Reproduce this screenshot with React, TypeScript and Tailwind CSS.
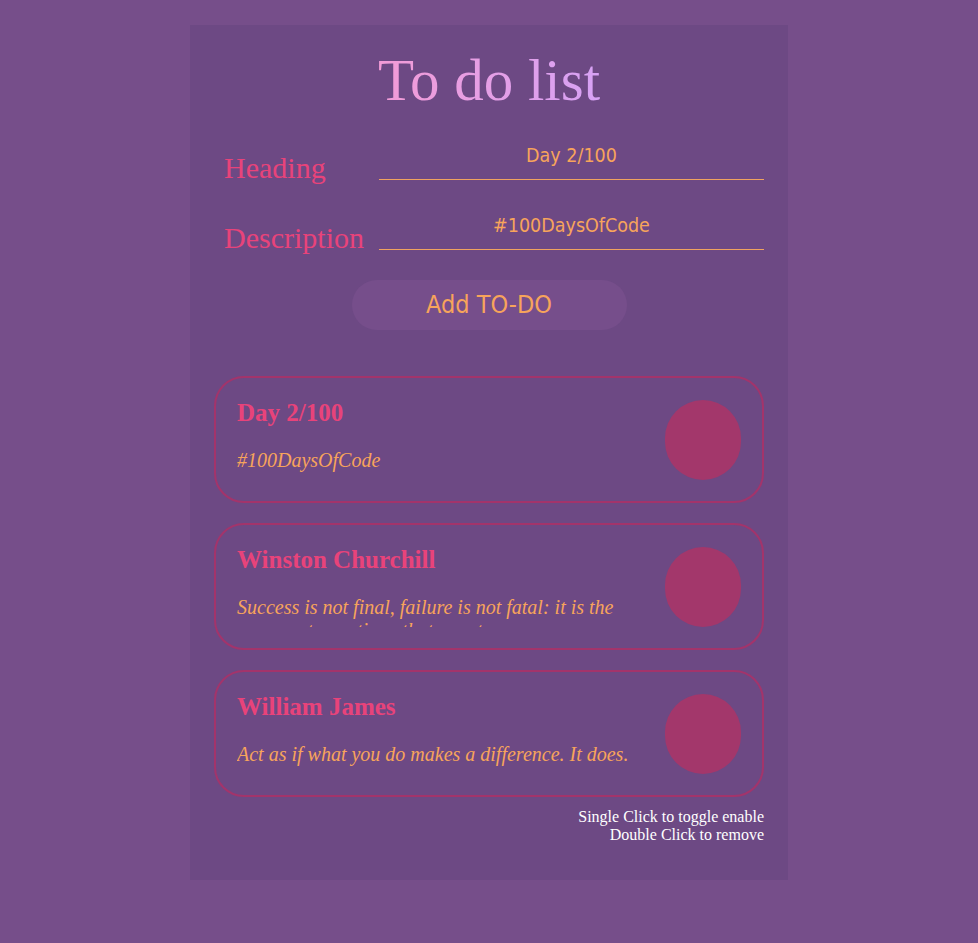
import { useState } from "react";

type Todo = {
  id: number;
  title: string;
  desc: string;
  enabled: boolean;
};

const serif = "font-['Liberation_Serif','Times_New_Roman',serif]";
const inputFont =
  "font-['DejaVu_Sans_Condensed','DejaVu_Sans','Liberation_Sans',sans-serif]";

const initialTodos: Todo[] = [
  { id: 1, title: "Day 2/100", desc: "#100DaysOfCode", enabled: true },
  {
    id: 2,
    title: "Winston Churchill",
    desc: "Success is not final, failure is not fatal: it is the courage to continue that counts.",
    enabled: true,
  },
  {
    id: 3,
    title: "William James",
    desc: "Act as if what you do makes a difference. It does.",
    enabled: true,
  },
];

const App = () => {
  const [heading, setHeading] = useState<string>("Day 2/100");
  const [description, setDescription] = useState<string>("#100DaysOfCode");
  const [todos, setTodos] = useState<Todo[]>(initialTodos);

  const handleAdd = () => {
    if (!heading.trim()) return;
    setTodos([
      { id: Date.now(), title: heading, desc: description, enabled: true },
      ...todos,
    ]);
  };

  const handleToggle = (id: number) => {
    setTodos(todos.map((t) => (t.id === id ? { ...t, enabled: !t.enabled } : t)));
  };

  const handleRemove = (id: number) => {
    setTodos(todos.filter((t) => t.id !== id));
  };

  return (
    <div className="min-h-screen bg-[#764e8a] pt-[25px] pb-[63px]">
      <div className="mx-auto w-[598px] bg-[#6d4984] pt-[22px] pb-[35px]">
        <h1
          className={`${serif} text-center text-[59px] leading-[67px] mb-[18px]`}
        >
          <span className="bg-gradient-to-r from-[#f29bd6] to-[#d7a2f5] bg-clip-text text-transparent">
            To do list
          </span>
        </h1>

        <div className="flex flex-col gap-[22px] pl-[34px] pr-[24px]">
          <div className="flex items-end">
            <label className={`${serif} w-[155px] text-[30px] leading-[24px] text-[#e8437a]`}>
              Heading
            </label>
            <input
              value={heading}
              onChange={(e) => setHeading(e.target.value)}
              className={`${inputFont} h-[48px] flex-1 border-b border-[#f0a35f] bg-transparent text-center text-[19.5px] text-[#f7a45b] outline-none`}
            />
          </div>
          <div className="flex items-end">
            <label className={`${serif} w-[155px] text-[30px] leading-[24px] text-[#e8437a]`}>
              Description
            </label>
            <input
              value={description}
              onChange={(e) => setDescription(e.target.value)}
              className={`${inputFont} h-[48px] flex-1 border-b border-[#f0a35f] bg-transparent text-center text-[19.5px] text-[#f7a45b] outline-none`}
            />
          </div>
        </div>

        <div className="mt-[30px] flex justify-center">
          <button
            onClick={handleAdd}
            className={`${inputFont} h-[50px] w-[275px] rounded-full bg-[#764e8b] text-[25px] text-[#f7a45b]`}
          >
            Add TO-DO
          </button>
        </div>

        <div className="mt-[46px] flex flex-col gap-[20px] px-[24px]">
          {todos.map((item) => (
            <div
              key={item.id}
              onClick={() => handleToggle(item.id)}
              onDoubleClick={() => handleRemove(item.id)}
              className={`flex cursor-pointer items-center gap-[20px] rounded-[30px] border-2 border-[#a3346b] px-[21px] py-[21px] ${
                item.enabled ? "" : "opacity-50"
              }`}
            >
              <div className={`${serif} flex-1`}>
                <h2 className="text-[25px] font-bold leading-[28px] text-[#e8437a]">
                  {item.title}
                </h2>
                <p className="mt-[22px] h-[31px] overflow-hidden text-[20px] italic leading-[23px] text-[#f7a45b]">
                  {item.desc}
                </p>
              </div>
              <div className="h-[80px] w-[76px] shrink-0 rounded-full bg-[#a3376b]" />
            </div>
          ))}
        </div>

        <div
          className={`${serif} mt-[11px] px-[24px] text-right text-[16px] leading-[18.4px] text-white`}
        >
          <p>Single Click to toggle enable</p>
          <p>Double Click to remove</p>
        </div>
      </div>
    </div>
  );
};

export default App;
